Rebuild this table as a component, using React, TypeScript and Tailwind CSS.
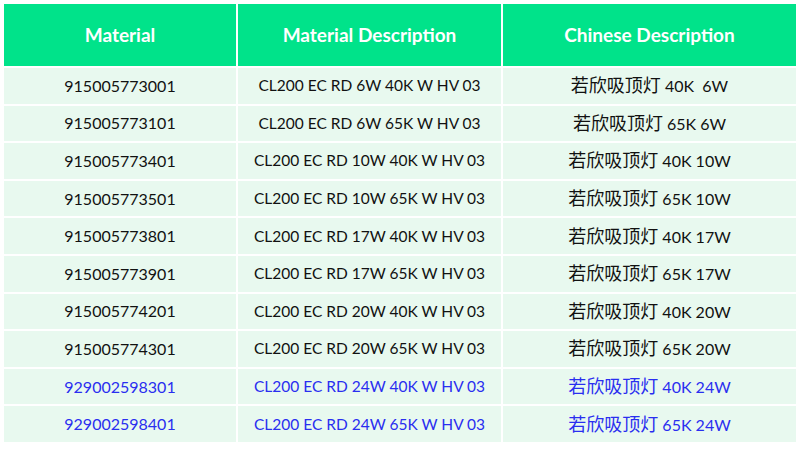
const rows = [
  ["915005773001", "CL200 EC RD 6W 40K W HV 03", "40K  6W", false],
  ["915005773101", "CL200 EC RD 6W 65K W HV 03", "65K 6W", false],
  ["915005773401", "CL200 EC RD 10W 40K W HV 03", "40K 10W", false],
  ["915005773501", "CL200 EC RD 10W 65K W HV 03", "65K 10W", false],
  ["915005773801", "CL200 EC RD 17W 40K W HV 03", "40K 17W", false],
  ["915005773901", "CL200 EC RD 17W 65K W HV 03", "65K 17W", false],
  ["915005774201", "CL200 EC RD 20W 40K W HV 03", "40K 20W", false],
  ["915005774301", "CL200 EC RD 20W 65K W HV 03", "65K 20W", false],
  ["929002598301", "CL200 EC RD 24W 40K W HV 03", "40K 24W", true],
  ["929002598401", "CL200 EC RD 24W 65K W HV 03", "65K 24W", true],
] as const;

const font = { fontFamily: "Lato, 'Noto Sans CJK SC', sans-serif" };
const cell = "flex h-[35.6px] items-center justify-center whitespace-pre bg-[#e8f9ef]";

export default function App() {
  return (
    <div className="h-[449px] w-[800px] bg-white pl-[4px] pt-[4px]" style={font}>
      <div className="grid w-[792px] grid-cols-[232px_263px_293px] gap-[2px]">
        {["Material", "Material Description", "Chinese Description"].map((h) => (
          <div
            key={h}
            className="flex h-[62px] items-center justify-center bg-[#00e38a] text-[19px] font-bold text-white"
          >
            {h}
          </div>
        ))}
        {rows.map(([code, desc, spec, blue]) => {
          const color = blue ? "text-[#2a2ef0]" : "text-[#111]";
          return [
            <div key={code + "a"} className={`${cell} ${color} text-[16px]`}>
              {code}
            </div>,
            <div key={code + "b"} className={`${cell} ${color} text-[15.5px]`}>
              {desc}
            </div>,
            <div key={code + "c"} className={`${cell} ${color} text-[16px]`}>
              <span>
                <span className="text-[18px]">若欣吸顶灯</span>
                {" " + spec}
              </span>
            </div>,
          ];
        })}
      </div>
    </div>
  );
}
